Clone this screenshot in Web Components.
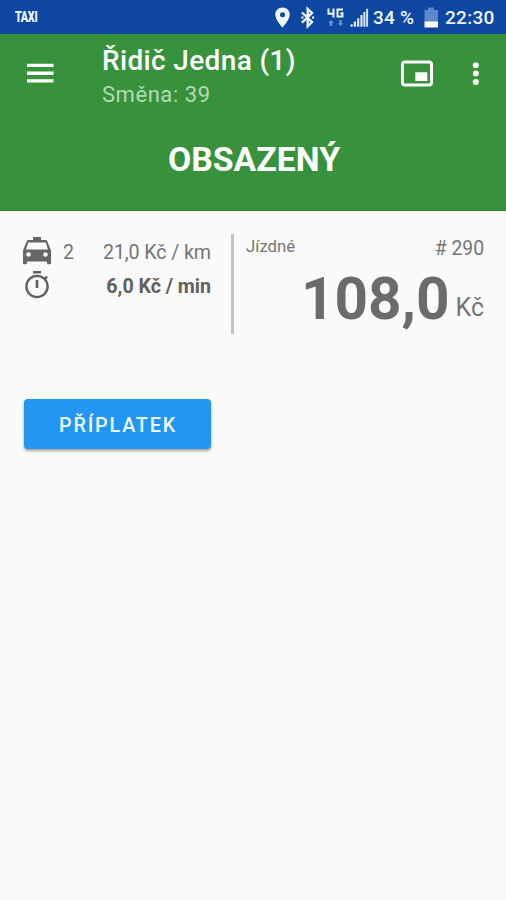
<!DOCTYPE html>
<html lang="cs">
<head>
<meta charset="utf-8">
<title>Taxi</title>
<style>
html,body{margin:0;height:100%}
body{background:#fafafa;font-family:Roboto,"Liberation Sans",sans-serif;color:#757575}
</style>
</head>
<body>
<taxi-screen></taxi-screen>
<script>
function define(name, html){
  const t=document.createElement('template');
  t.innerHTML=html;
  customElements.define(name, class extends HTMLElement{
    constructor(){super();this.attachShadow({mode:'open'}).append(t.content.cloneNode(true));}
  });
}

define('status-bar', `
<style>
:host{display:flex;height:34px;background:#0d47a1;color:#f2f6ff;box-sizing:border-box;padding:0 10px 0 15px;align-items:center;white-space:nowrap;font-weight:500;font-size:19px;line-height:36px}
svg{display:block;flex:none}
.app{font-size:14.5px;line-height:38px;padding-top:2px;font-weight:900;width:23px;transform:scaleX(.74);transform-origin:0 50%;letter-spacing:-.4px}
.tray{display:flex;align-items:center;margin-left:auto}
.pct{width:42px;margin-left:3px;padding-top:2px;letter-spacing:.2px}
.time{width:51px;margin-left:6px;padding-top:2px;letter-spacing:.3px}
</style>
<span class="app">TAXI</span>
<div class="tray">
<svg width="96" height="34" viewBox="274 0 96 34">
<path fill="#f2f6ff" fill-rule="evenodd" d="M282.5 7.500c-4.200 0-7.300 3.200-7.300 7.100 0 5.300 7.300 13 7.300 13s7.300-7.700 7.300-13c0-3.900-3.100-7.100-7.300-7.100zm0 4.700a2.500 2.500 0 1 1 0 5 2.500 2.500 0 0 1 0-5z"/>
<path fill="none" stroke="#f2f6ff" stroke-width="2.400" d="M302 12.500l10 9.500-4.300 4.100V9l4.300 4.100-10 9.500"/>
<path fill="#f2f6ff" d="M301.300 16.400h2.200v2.200h-2.200zM312 16.400h2.200v2.200h-2.200z"/>
<path fill="none" stroke="#f2f6ff" stroke-width="2" d="M328.500 8.500v5.300h6M333.500 8.500v9M343 9.500h-5.500v7h5v-3.200h-2.300"/>
<path fill="#6f96d4" d="M331 20l2.600 2.800h-1.400v3.200h-2.400v-3.200h-1.400zM340.500 26l-2.600-2.800h1.400V20h2.400v3.200h1.400z"/>
<path fill="#dfe8fa" d="M350.500 24.300h2.200v2.500h-2.200zM353.800 21.500h2.200v5.300h-2.200zM357.100 18.300h2.200v8.500h-2.200zM360.400 15h2.200v11.800h-2.200zM363.400 12h2v14.800h-2zM366.200 8.700h1.900v18.100h-1.900z"/>
</svg>
<span class="pct">34 %</span>
<svg style="margin-left:9px" width="15" height="34" viewBox="0 0 15 34"><path fill="#5b88c8" d="M4 7.500h6v2.500h4v12H.5V10H4z"/><path fill="#fff" d="M.5 21.500H14v6H.5z"/></svg>
<span class="time">22:30</span>
</div>`);

define('app-header', `
<style>
:host{display:flex;flex-direction:column;height:177px;background:#37923b;color:#fff;box-sizing:border-box;border-bottom:1px solid #2b8530}
.bar{display:flex;height:84px;padding:0 22px 0 27px}
svg{display:block;flex:none}
.titles{margin-left:48px;flex:1;padding-top:10px;white-space:nowrap}
.t{font-size:28px;line-height:34px;font-weight:500;letter-spacing:.35px}
.s{font-size:22px;line-height:33px;color:#b4dab5;letter-spacing:.55px}
.state{text-align:center;font-size:33.800px;line-height:40px;font-weight:700;padding:22px 0 0 2px}
</style>
<div class="bar">
<svg width="27" height="84" viewBox="27 34 27 84"><path fill="#fff" d="M27 63.800h26.500v3.300H27zM27 71.600h26.500v3.300H27zM27 79.200h26.500v3.300H27z"/></svg>
<div class="titles"><div class="t"><slot name="title"></slot></div><div class="s"><slot name="sub"></slot></div></div>
<svg width="84" height="84" viewBox="400 34 84 84"><rect x="402.500" y="62" width="29" height="23" rx="2.500" fill="none" stroke="#fff" stroke-width="3"/><path fill="#fff" d="M415.300 72.300h12v8.700h-12z"/><g fill="#fff"><circle cx="475.800" cy="65.200" r="3"/><circle cx="475.800" cy="73.600" r="3"/><circle cx="475.800" cy="82" r="3"/></g></svg>
</div>
<div class="state"><slot name="state"></slot></div>`);

define('tariff-panel', `
<style>
:host{display:block;width:188px;padding-top:7px;font-size:19.700px;white-space:nowrap}
.r{display:flex;height:34px;line-height:34px;align-items:center}
.r+.r{height:33px;line-height:33px}
svg{flex:none;display:block}
.r span{padding-top:3px}
.n{margin-left:12px}
.v{margin-left:auto;letter-spacing:-.12px}
.b{font-weight:700;color:#616161;letter-spacing:-.05px}
</style>
<div class="r">
<svg width="28" height="34" viewBox="23 234 28 34"><path fill="#666" fill-rule="evenodd" d="M33 237h8v3h4.600q1.200 0 1.700 1.200L51 250.500V263q0 1.300-1.200 1.300h-1.600q-1.200 0-1.200-1.300v-1.500H27v1.500q0 1.300-1.200 1.300h-1.600q-1.200 0-1.200-1.300v-12.500l3.700-9.300q.5-1.200 1.700-1.200H33zM28.300 242.500L26 249.500h22l-2.300-7zM28.500 252.200a2.300 2.300 0 1 0 0 4.600 2.300 2.300 0 0 0 0-4.600zM45.500 252.200a2.300 2.300 0 1 0 0 4.600 2.300 2.300 0 0 0 0-4.600z"/></svg>
<span class="n">2</span><span class="v">21,0 Kč / km</span></div>
<div class="r">
<svg width="28" height="33" viewBox="23 268 28 33"><g fill="none" stroke="#616161"><circle cx="37" cy="286.500" r="10.600" stroke-width="2.400"/><path stroke-width="2.600" d="M33 272.300h8M37 280v8M44.300 279.500l2.800-2.800"/></g></svg>
<span class="v b">6,0 Kč / min</span></div>`);

define('fare-panel', `
<style>
:host{display:block;flex:1;margin-left:20px;border-left:3px solid #c2c2c2;height:100px;padding-left:12px;white-space:nowrap}
.top{display:flex;justify-content:space-between;height:28px;line-height:30px;font-size:19.300px}
.l{font-size:16.800px;line-height:24px}
.sum{display:flex;justify-content:flex-end;align-items:baseline;height:72px;line-height:62px;padding-top:6px;box-sizing:border-box}
.a{font-size:58.500px;font-weight:700;color:#6b6b6b}
.c{font-size:25px;margin-left:6px;position:relative;top:-3px}
</style>
<div class="top"><span class="l">Jízdné</span><span># 290</span></div>
<div class="sum"><span class="a">108,0</span><span class="c">Kč</span></div>`);

define('action-button', `
<style>
:host{display:block;width:187px;margin:65px 0 0 24px}
button{display:block;width:100%;height:50px;border:0;border-radius:4px;background:#2196f3;color:#eff8ff;font:500 19.800px/48px Roboto,sans-serif;letter-spacing:1.800px;padding:3px 0 0 1px;box-shadow:0 2px 3px rgba(0,0,0,.35);text-align:center}
</style>
<button><slot></slot></button>`);

define('taxi-screen', `
<style>
:host{display:block;height:900px;background:#fafafa;overflow:hidden}
.meter{display:flex;padding:23px 22px 0 23px}
tariff-panel{margin-top:-7px}
</style>
<status-bar></status-bar>
<app-header><span slot="title">Řidič Jedna (1)</span><span slot="sub">Směna: 39</span><span slot="state">OBSAZENÝ</span></app-header>
<div class="meter"><tariff-panel></tariff-panel><fare-panel></fare-panel></div>
<action-button>PŘÍPLATEK</action-button>`);
</script>
</body>
</html>
